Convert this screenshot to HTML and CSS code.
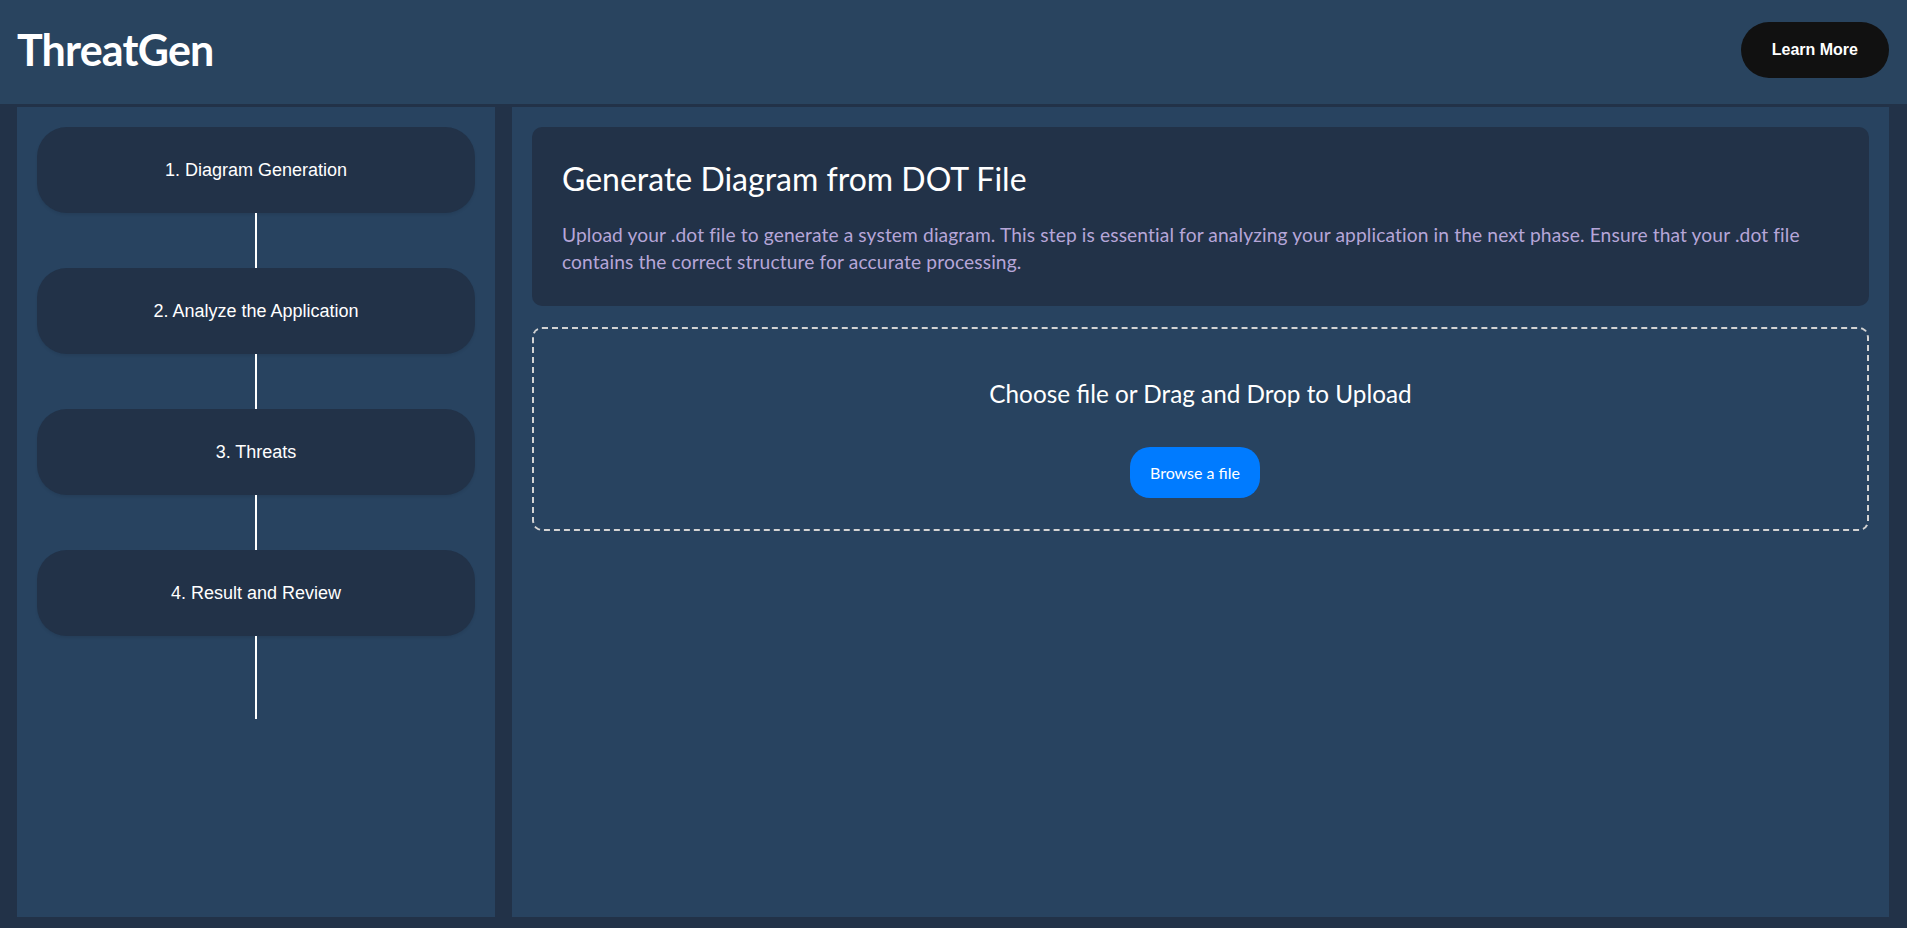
FILE: index.html
```html
<!DOCTYPE html>
<html lang="en">
<head>
<meta charset="utf-8">
<title>ThreatGen</title>
<link rel="stylesheet" href="styles.css">
</head>
<body>
<header class="topbar">
  <h1 class="brand">ThreatGen</h1>
  <button class="learn-btn" type="button">Learn More</button>
</header>
<div class="layout">
  <aside class="sidebar">
    <div class="steps">
      <div class="step">1. Diagram Generation</div>
      <div class="connector"></div>
      <div class="step">2. Analyze the Application</div>
      <div class="connector"></div>
      <div class="step">3. Threats</div>
      <div class="connector"></div>
      <div class="step">4. Result and Review</div>
      <div class="connector connector-end"></div>
    </div>
  </aside>
  <main class="content">
    <section class="intro">
      <h2 class="intro-title">Generate Diagram from DOT File</h2>
      <p class="intro-text">Upload your .dot file to generate a system diagram. This step is essential for analyzing your application in the next phase. Ensure that your .dot file contains the correct structure for accurate processing.</p>
    </section>
    <section class="dropzone">
      <h3 class="drop-title">Choose file or Drag and Drop to Upload</h3>
      <label class="browse-btn">Browse a file</label>
    </section>
  </main>
</div>
</body>
</html>
```
FILE: styles.css
```css
* {
  box-sizing: border-box;
}

html, body {
  margin: 0;
  padding: 0;
}

body {
  background: #223248;
  font-family: Lato, "Open Sans", sans-serif;
  color: #ffffff;
  width: 1907px;
  height: 928px;
  overflow: hidden;
}

.topbar {
  height: 104px;
  background: #29445f;
  display: flex;
  align-items: center;
  justify-content: space-between;
  padding: 0 18px 4px 17px;
}

.brand {
  margin: 0;
  font-family: Lato, sans-serif;
  font-weight: 700;
  font-size: 43px;
  letter-spacing: -0.8px;
  line-height: 1.2;
  color: #ffffff;
}

.learn-btn {
  background: #111111;
  color: #ffffff;
  border: none;
  border-radius: 28px;
  padding: 19px 31px;
  font-family: "Liberation Sans", Arial, sans-serif;
  font-weight: 700;
  font-size: 16px;
  line-height: 18px;
  white-space: nowrap;
}

.layout {
  display: flex;
  gap: 17px;
  height: 824px;
  padding: 3px 18px 11px 17px;
}

.sidebar {
  flex: none;
  width: 478px;
  background: #284360;
  padding: 20px;
}

.steps {
  display: flex;
  flex-direction: column;
  align-items: center;
}

.step {
  width: 100%;
  height: 86px;
  border-radius: 30px;
  background: #223248;
  box-shadow: 0 2px 3px rgba(0, 0, 0, 0.08);
  display: flex;
  align-items: center;
  justify-content: center;
  font-family: "Liberation Sans", Arial, sans-serif;
  font-size: 18px;
  color: #ffffff;
}

.connector {
  width: 2px;
  height: 55px;
  background: #ffffff;
}

.connector-end {
  height: 83px;
}

.content {
  flex: 1;
  background: #284360;
  padding: 20px;
  display: flex;
  flex-direction: column;
  gap: 21px;
}

.intro {
  background: #223248;
  border-radius: 10px;
  padding: 30px 30px 31px 30px;
}

.intro-title {
  margin: 3px 0 23px;
  font-weight: 400;
  font-size: 32px;
  line-height: 1.2;
  color: #ffffff;
}

.intro-text {
  margin: 0;
  font-size: 19.2px;
  letter-spacing: 0.12px;
  line-height: 27px;
  color: #b6a6d8;
}

.dropzone {
  border: 2px dashed #d3d3d3;
  border-radius: 10px;
  padding: 30px 30px 31px;
  display: flex;
  flex-direction: column;
  align-items: center;
}

.drop-title {
  margin: 20px 0 38px;
  font-weight: 400;
  font-size: 24.3px;
  line-height: 1.2;
  color: #ffffff;
}

.browse-btn {
  background: #007bff;
  color: #ffffff;
  border-radius: 20px;
  padding: 15px 20px;
  font-size: 16px;
  line-height: 21px;
  margin-right: 11px;
  cursor: pointer;
}
```
